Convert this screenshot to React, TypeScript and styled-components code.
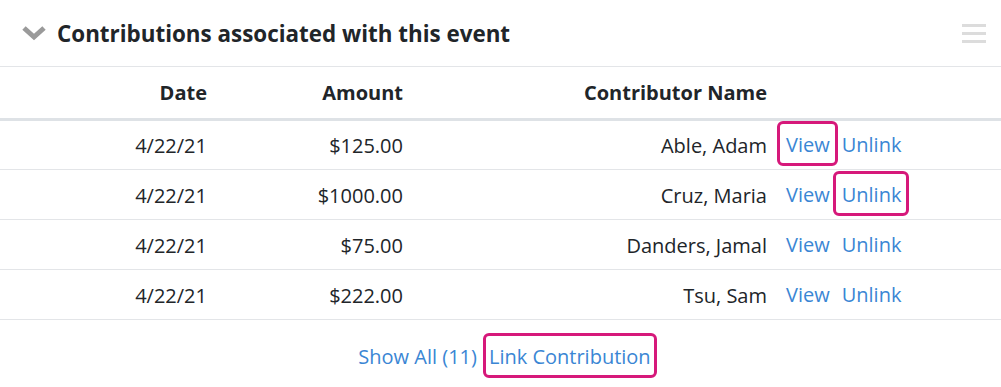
import React from 'react';
import styled, { createGlobalStyle } from 'styled-components';

const GlobalStyle = createGlobalStyle`
  body {
    margin: 0;
    background: #fff;
    font-family: "Open Sans", "Noto Sans", sans-serif;
    color: #212529;
  }
  * {
    box-sizing: border-box;
  }
`;

const Panel = styled.section`
  width: 1001px;
  height: 387px;
  overflow: hidden;
  background: #fff;
`;

const Header = styled.div`
  display: flex;
  align-items: center;
  height: 67px;
  padding: 0 14px 0 22px;
  border-bottom: 1px solid #e3e5e8;
`;

const Title = styled.h2`
  flex: 1;
  margin: 0 0 0 11px;
  font-size: 22.4px;
  font-weight: 700;
  color: #212529;
`;

const Table = styled.table`
  width: 1001px;
  border-collapse: collapse;
  table-layout: fixed;
  font-size: 20px;
`;

const Th = styled.th<{ $w: number; $align?: string }>`
  width: ${(p) => p.$w}px;
  height: 52px;
  padding: 0 12px;
  text-align: ${(p) => p.$align || 'right'};
  font-weight: 700;
  border-bottom: 3px solid #dee2e6;
  vertical-align: middle;
`;

const Td = styled.td<{ $align?: string }>`
  height: 50px;
  padding: 0 12px;
  padding-top: 2px;
  text-align: ${(p) => p.$align || 'right'};
  border-bottom: 1px solid #e3e5e8;
  vertical-align: middle;
  white-space: nowrap;
`;

const Actions = styled.div`
  display: flex;
  align-items: center;
  gap: 12px;
  padding-left: 7px;
`;

const LinkText = styled.a<{ $hl?: boolean; $inset?: number }>`
  position: relative;
  color: #3a86d4;
  text-decoration: none;
  cursor: pointer;
  &::after {
    content: '';
    display: ${(p) => (p.$hl ? 'block' : 'none')};
    position: absolute;
    left: -${(p) => p.$inset ?? 9}px;
    right: -${(p) => p.$inset ?? 8}px;
    top: -10px;
    bottom: -8px;
    border: 3px solid #d6187a;
    border-radius: 6px;
  }
`;

const Footer = styled.div`
  display: flex;
  justify-content: center;
  align-items: center;
  gap: 12px;
  padding-top: 23px;
  padding-left: 8px;
  font-size: 20px;
`;

const rows = [
  { date: '4/22/21', amount: '$125.00', name: 'Able, Adam', hl: 'view' },
  { date: '4/22/21', amount: '$1000.00', name: 'Cruz, Maria', hl: 'unlink' },
  { date: '4/22/21', amount: '$75.00', name: 'Danders, Jamal', hl: '' },
  { date: '4/22/21', amount: '$222.00', name: 'Tsu, Sam', hl: '' },
];

const Chevron = () => (
  <svg width="24" height="16" viewBox="0 0 24 16">
    <path d="M2 3 L12 12 L22 3" fill="none" stroke="#9a9a9a" strokeWidth="5" />
  </svg>
);

const Hamburger = () => (
  <svg width="26" height="22" viewBox="0 0 26 22">
    <rect x="1" y="2" width="24" height="3" fill="#dcdcdc" />
    <rect x="1" y="10" width="24" height="3" fill="#dcdcdc" />
    <rect x="1" y="18" width="24" height="3" fill="#dcdcdc" />
  </svg>
);

export default function App() {
  return (
    <>
      <GlobalStyle />
      <Panel>
        <Header>
          <Chevron />
          <Title>Contributions associated with this event</Title>
          <Hamburger />
        </Header>
        <Table>
          <thead>
            <tr>
              <Th $w={219}>Date</Th>
              <Th $w={196}>Amount</Th>
              <Th $w={364}>Contributor Name</Th>
              <Th $w={222} $align="left"></Th>
            </tr>
          </thead>
          <tbody>
            {rows.map((r, i) => (
              <tr key={i}>
                <Td>{r.date}</Td>
                <Td>{r.amount}</Td>
                <Td>{r.name}</Td>
                <Td $align="left" style={{ padding: 0 }}>
                  <Actions>
                    <LinkText $hl={r.hl === 'view'}>View</LinkText>
                    <LinkText $hl={r.hl === 'unlink'}>Unlink</LinkText>
                  </Actions>
                </Td>
              </tr>
            ))}
          </tbody>
        </Table>
        <Footer>
          <LinkText>Show All (11)</LinkText>
          <LinkText $hl $inset={6}>Link Contribution</LinkText>
        </Footer>
      </Panel>
    </>
  );
}
